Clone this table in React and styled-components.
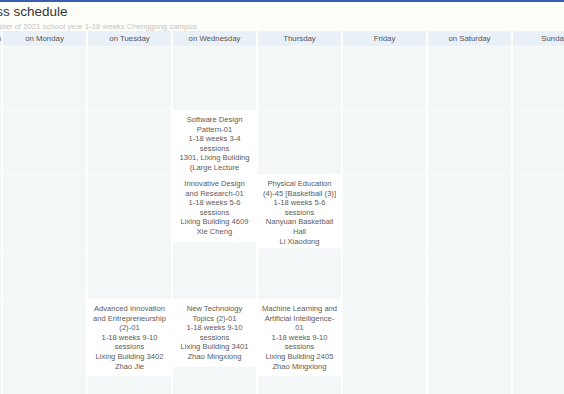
import styled, { createGlobalStyle } from 'styled-components';

const GlobalStyle = createGlobalStyle`
    html, body {
        margin: 0;
        padding: 0;
        background: #fff;
        overflow: hidden;
    }
`;

const Viewport = styled.div`
    width: 564px;
    height: 394px;
    overflow: hidden;
    font-family: "Liberation Sans", Arial, sans-serif;
`;

const TopLine = styled.div`
    height: 2px;
    background: #3d5cb4;
`;

const Head = styled.div`
    background: #fefef9;
    height: 29px;
    overflow: hidden;
    margin-left: -24px;
`;

const Title = styled.div`
    font-size: 13.5px;
    line-height: 16px;
    color: #333;
    padding-top: 2px;
    white-space: nowrap;
    margin-left: ${p => p.shift}px;
`;

const Subtitle = styled.div`
    font-size: 7.8px;
    line-height: 10px;
    color: #c4c4c4;
    white-space: nowrap;
    margin-top: 2px;
    margin-left: ${p => p.shift}px;
`;

const Grid = styled.div`
    display: grid;
    grid-template-columns: 29px repeat(7, 83px);
    grid-template-rows: 15px 64px 64px 74px 51px 77px 40px;
    column-gap: 2px;
    margin-left: -28px;
    background: #fff;
`;

const HeadCell = styled.div`
    background: #e9f0f8;
    color: #555;
    font-size: 7.8px;
    display: flex;
    align-items: center;
    justify-content: ${p => (p.end ? 'flex-end' : 'center')};
    white-space: nowrap;
    overflow: hidden;
`;

const Cell = styled.div`
    background: #f4f7f7;
    box-shadow: ${p => (p.last ? 'none' : 'inset 0 1px 0 #f9fbfb')};
    overflow: hidden;
    grid-column: ${p => p.col};
    grid-row: ${p => p.row};
`;

const Card = styled.div`
    background: #fff;
    color: #5a5a5a;
    font-size: 7.6px;
    line-height: 9.6px;
    text-align: center;
    padding: 5px 2px 5px;
`;

const Line = styled.div`
    white-space: nowrap;
`;

const days = ['on Monday', 'on Tuesday', 'on Wednesday', 'Thursday', 'Friday', 'on Saturday', 'Sunday'];

// lines kept as wrapped in the timetable; the 3-4 cell cuts its card off
const courses = {
    '4-3': ['Software Design', 'Pattern-01', '1-18 weeks 3-4', 'sessions', '1301, Lixing Building', '(Large Lecture'],
    '4-4': ['Innovative Design', 'and Research-01', '1-18 weeks 5-6', 'sessions', 'Lixing Building 4609', 'Xie Cheng'],
    '5-4': ['Physical Education', '(4)-45 [Basketball (3)]', '1-18 weeks 5-6', 'sessions', 'Nanyuan Basketball', 'Hall', 'Li Xiaodong'],
    '3-6': ['Advanced Innovation', 'and Entrepreneurship', '(2)-01', '1-18 weeks 9-10', 'sessions', 'Lixing Building 3402', 'Zhao Jie'],
    '4-6': ['New Technology', 'Topics (2)-01', '1-18 weeks 9-10', 'sessions', 'Lixing Building 3401', 'Zhao Mingxiong'],
    '5-6': ['Machine Learning and', 'Artificial Intelligence-', '01', '1-18 weeks 9-10', 'sessions', 'Lixing Building 2405', 'Zhao Mingxiong'],
};

const rows = [2, 3, 4, 5, 6, 7];
const cols = [1, 2, 3, 4, 5, 6, 7, 8];

const App = () => (
    <Viewport>
        <GlobalStyle />
        <TopLine />
        <Head>
            <Title shift={0}>Class schedule</Title>
            <Subtitle shift={3}>Semester of 2021 school year 1-18 weeks Chenggong campus</Subtitle>
        </Head>
        <Grid>
            <HeadCell end>Section</HeadCell>
            {days.map(d => <HeadCell key={d}>{d}</HeadCell>)}
            {rows.map(r => cols.map(c => {
                const course = courses[`${c}-${r}`];
                return (
                    <Cell key={`${c}-${r}`} col={c} row={r} last={r === 7}>
                        {course && (
                            <Card>
                                {course.map((line, i) => <Line key={i}>{line}</Line>)}
                            </Card>
                        )}
                    </Cell>
                );
            }))}
        </Grid>
    </Viewport>
);

export default App;
